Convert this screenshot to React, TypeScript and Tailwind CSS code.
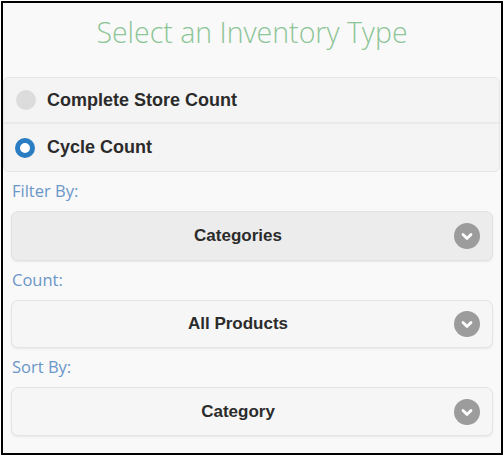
const LABEL_FONT = { fontFamily: '"Open Sans", "Noto Sans", sans-serif' };
const BOLD_FONT = { fontFamily: '"Liberation Sans", Arial, sans-serif' };

function Chevron() {
  return (
    <span className="absolute right-[12px] top-1/2 -translate-y-1/2 w-[26px] h-[26px] rounded-full bg-[#9c9c9c] flex items-center justify-center">
      <svg width="14" height="14" viewBox="0 0 14 14" fill="none" aria-hidden="true">
        <path d="M3 5.5 7 9.5 11 5.5" stroke="#fff" strokeWidth="2.8" strokeLinecap="round" strokeLinejoin="round" />
      </svg>
    </span>
  );
}

function Select({ value, dark, h }: { value: string; dark?: boolean; h: string }) {
  return (
    <div
      className={`relative ${h} rounded-[7px] border flex items-center justify-center pr-[28px] shadow-[0_1px_2px_rgba(0,0,0,0.08)] ${
        dark ? "bg-[#ececec] border-[#e2e2e2]" : "bg-[#f6f6f6] border-[#e4e4e4]"
      }`}
    >
      <span className="text-[17px] font-bold text-[#2b2b2b]" style={BOLD_FONT}>
        {value}
      </span>
      <Chevron />
    </div>
  );
}

function Label({ text, h }: { text: string; h: string }) {
  return (
    <div className={`${h} flex items-center pl-px text-[16.5px] text-[#6a96c8]`} style={LABEL_FONT}>
      {text}
    </div>
  );
}

export default function App() {
  return (
    <div className="w-[504px] h-[457px] bg-white pl-px pt-px">
      <div className="w-[502px] h-[454px] border-2 border-black bg-[#f9f9f9] flex flex-col">
        <div className="h-[74px] flex items-center justify-center pb-[15px]">
          <h1 className="text-[28.5px] font-light text-[#8cc596]" style={LABEL_FONT}>
            Select an Inventory Type
          </h1>
        </div>

        <div className="rounded-[6px] border border-[#e6e6e6] bg-[#f4f4f4] mr-px">
          <div className="h-[46px] flex items-center border-b-2 border-[#e9e9e9]">
            <span className="ml-[12px] w-[20px] h-[20px] rounded-full bg-[#dcdcdc]" />
            <span className="ml-[11px] text-[18px] font-bold text-[#2b2b2b]" style={BOLD_FONT}>
              Complete Store Count
            </span>
          </div>
          <div className="h-[47px] flex items-center">
            <span className="ml-[11px] w-[20px] h-[20px] rounded-full border-[5px] border-[#2a7dc2] bg-white" />
            <span className="ml-[12px] text-[18px] font-bold text-[#2b2b2b]" style={BOLD_FONT}>
              Cycle Count
            </span>
          </div>
        </div>

        <div className="px-[8px]">
          <Label text="Filter By:" h="h-[39px]" />
          <Select value="Categories" dark h="h-[50px]" />
          <Label text="Count:" h="h-[39px]" />
          <Select value="All Products" h="h-[48px]" />
          <Label text="Sort By:" h="h-[39px]" />
          <Select value="Category" h="h-[49px]" />
        </div>
      </div>
    </div>
  );
}
